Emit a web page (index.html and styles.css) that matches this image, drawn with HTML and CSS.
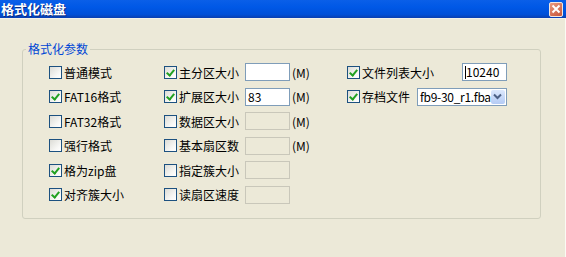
FILE: index.html
```html
<!DOCTYPE html>
<html lang="zh-CN">
<head>
    <meta charset="UTF-8">
    <title>格式化磁盘</title>
    <link rel="stylesheet" href="styles.css">
</head>
<body>
    <div class="window">
        <div class="titlebar">
            <span class="title">格式化磁盘</span>
            <span class="close">
                <svg width="10" height="10" viewBox="0 0 10 10"><path d="M1.5 1.5 L8.5 8.5 M8.5 1.5 L1.5 8.5" stroke="#fff" stroke-width="2"/></svg>
            </span>
        </div>
        <div class="content">
            <fieldset class="group">
                <legend>格式化参数</legend>
                <div class="cols">
                    <div class="col col-a">
                        <div class="row"><span class="box"></span>普通模式</div>
                        <div class="row"><span class="box on"></span>FAT16格式</div>
                        <div class="row"><span class="box"></span>FAT32格式</div>
                        <div class="row"><span class="box"></span>强行格式</div>
                        <div class="row"><span class="box on"></span>格为zip盘</div>
                        <div class="row"><span class="box on"></span>对齐簇大小</div>
                    </div>
                    <div class="col col-b">
                        <div class="row"><span class="lbl"><span class="box on"></span>主分区大小</span><span class="field"></span><span class="unit">(M)</span></div>
                        <div class="row"><span class="lbl"><span class="box on"></span>扩展区大小</span><span class="field">83</span><span class="unit">(M)</span></div>
                        <div class="row"><span class="lbl"><span class="box"></span>数据区大小</span><span class="field off"></span><span class="unit">(M)</span></div>
                        <div class="row"><span class="lbl"><span class="box"></span>基本扇区数</span><span class="field off"></span><span class="unit">(M)</span></div>
                        <div class="row"><span class="lbl"><span class="box"></span>指定簇大小</span><span class="field off"></span></div>
                        <div class="row"><span class="lbl"><span class="box"></span>读扇区速度</span><span class="field off"></span></div>
                    </div>
                    <div class="col col-c">
                        <div class="row"><span class="lbl wide"><span class="box on"></span>文件列表大小</span><span class="field"><span class="caret"></span>10240</span></div>
                        <div class="row"><span class="lbl"><span class="box on"></span>存档文件</span>
                            <span class="select">fb9-30_r1.fba<span class="drop"><svg width="9" height="7" viewBox="0 0 9 7"><path d="M1 1.5 L4.5 5 L8 1.5" fill="none" stroke="#4d6185" stroke-width="2"/></svg></span></span>
                        </div>
                    </div>
                </div>
            </fieldset>
        </div>
    </div>
</body>
</html>
```

FILE: styles.css
```css
body {
    margin: 0;
    background: #ece9d8;
    font-family: 'Noto Sans CJK SC', 'DejaVu Sans', sans-serif;
    font-size: 12px;
    color: #000;
}

.window {
    width: 566px;
    height: 257px;
    background: #ece9d8;
    overflow: hidden;
}

.titlebar {
    height: 18px;
    background: linear-gradient(180deg, #0a5fe8 0%, #0058e6 40%, #0050d8 80%, #0a3fb0 100%);
    border-bottom: 1px solid #f4f2e8;
    display: flex;
    align-items: center;
    justify-content: space-between;
}

.title {
    color: #fff;
    font-weight: bold;
    font-size: 13px;
    padding-left: 1px;
    text-shadow: 1px 1px 0 #0a2a80;
    line-height: 18px;
}

.close {
    width: 12px;
    height: 13px;
    margin-right: 3px;
    border: 1px solid #f2e6e0;
    border-radius: 2px;
    background: linear-gradient(145deg, #e89a80, #c8553a);
    display: flex;
    align-items: center;
    justify-content: center;
}

.content {
    padding: 22px 24px 0 22px;
    border-right: 1px solid #fbfaf4;
    height: 220px;
    width: 519px;
}

.group {
    margin: 0;
    padding: 3px 0 0 26px;
    height: 173px;
    border: 1px solid #d0d0bf;
    border-radius: 3px;
}

.group legend {
    color: #0046d5;
    padding: 0 2px;
    margin-left: -23px;
    line-height: 16px;
}

.cols {
    display: flex;
}

.col-a { width: 115px; }
.col-b { width: 183px; }

.row {
    height: 24.5px;
    display: flex;
    align-items: center;
    white-space: nowrap;
}

.box {
    width: 11px;
    height: 11px;
    border: 1px solid #1c5180;
    background: linear-gradient(135deg, #dcdcd6, #f8f8f6 70%, #fff);
    margin-right: 2px;
    flex-shrink: 0;
    position: relative;
}

.box.on::after {
    content: "";
    position: absolute;
    left: 3px;
    top: 1px;
    width: 3px;
    height: 6px;
    border: solid #21a121;
    border-width: 0 2px 2px 0;
    transform: rotate(40deg);
}

.lbl {
    display: flex;
    align-items: center;
    width: 81px;
}

.lbl.wide { width: 115px; }

.col-c .row:nth-child(2) .lbl { width: 70px; }

.field {
    height: 16px;
    border: 1px solid #7f9db9;
    background: #fff;
    line-height: 16px;
    padding-left: 2px;
    box-sizing: content-box;
    width: 41px;
    display: flex;
    align-items: center;
}

.field.off {
    background: #ece9d8;
    border-color: #c9c7ba;
}

.caret {
    width: 1px;
    height: 13px;
    background: #000;
}

.unit {
    margin-left: 2px;
}

.select {
    height: 16px;
    border: 1px solid #7f9db9;
    background: #fff;
    display: flex;
    align-items: center;
    justify-content: space-between;
    padding-left: 2px;
    box-sizing: content-box;
    width: 86px;
    letter-spacing: -0.3px;
}

.drop {
    width: 15px;
    height: 14px;
    margin-right: 1px;
    border-radius: 2px;
    background: linear-gradient(180deg, #dce8fc, #b4cbf5);
    display: flex;
    align-items: center;
    justify-content: center;
}
```
